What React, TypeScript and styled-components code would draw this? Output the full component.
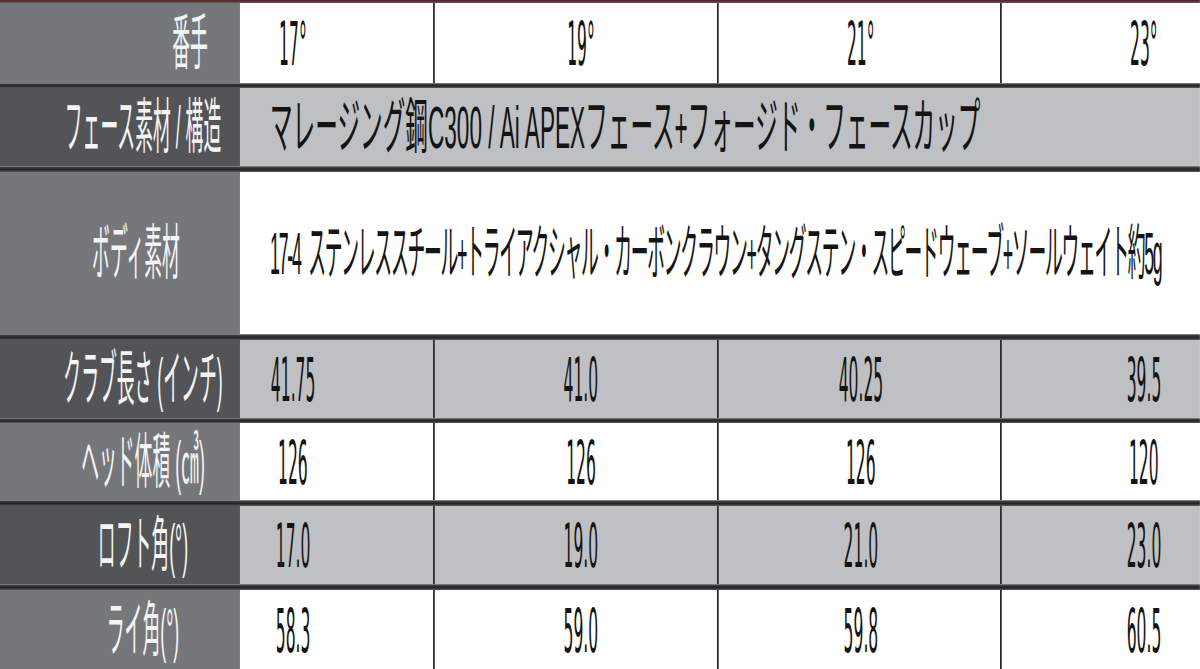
import React from "react";
import styled, { createGlobalStyle } from "styled-components";

/* The whole table is typeset at a wide size and compressed horizontally,
   reproducing the tall, condensed lettering of the reference. */
const S = 0.297;
const w = (v: number) => `${(v / S).toFixed(2)}px`;

const GlobalStyle = createGlobalStyle`
  html, body {
    margin: 0;
    padding: 0;
    width: 1200px;
    height: 669px;
    overflow: hidden;
    background: #ffffff;
  }
  * { box-sizing: border-box; }
`;

const Table = styled.div`
  width: ${w(1200)};
  height: 669px;
  display: flex;
  flex-direction: column;
  font-family: "Liberation Sans", "Noto Sans CJK JP", sans-serif;
  transform: scaleX(${S});
  transform-origin: left top;
`;

const TopStrip = styled.div`
  height: 3px;
  flex: none;
  background: linear-gradient(to bottom, #4e2226, #7a4a4f);
`;

const RowDivider = styled.div<{ $h: number }>`
  height: ${(p) => p.$h}px;
  flex: none;
  background: linear-gradient(
    to bottom,
    #9a9a9c 0%,
    #3c3c3e 25%,
    #232325 60%,
    #5c5c5e 100%
  );
`;

const Row = styled.div<{ $h: number }>`
  height: ${(p) => p.$h}px;
  flex: none;
  display: grid;
  grid-template-columns: ${w(240)} ${w(193)} ${w(284)} ${w(283)} 1fr;
`;

const HeadCell = styled.div<{ $dark: boolean; $pl: number }>`
  background: ${(p) => (p.$dark ? "#535457" : "#76777b")};
  color: #f4f4f4;
  display: flex;
  align-items: center;
  justify-content: center;
  padding-left: ${(p) => w(p.$pl)};
`;

const DataCell = styled.div<{
  $gray: boolean;
  $line: boolean;
  $pl?: number;
  $pr?: number;
}>`
  background: ${(p) => (p.$gray ? "#bfc0c3" : "#ffffff")};
  color: #141414;
  display: flex;
  align-items: center;
  justify-content: center;
  border-left: ${(p) => (p.$line ? `${w(2)} solid #2c2c2e` : "none")};
  padding-left: ${(p) => w(p.$pl ?? 0)};
  padding-right: ${(p) => w(p.$pr ?? 0)};
`;

const SpanCell = styled.div<{ $gray: boolean }>`
  grid-column: 2 / -1;
  background: ${(p) => (p.$gray ? "#bfc0c3" : "#ffffff")};
  color: #141414;
  display: flex;
  align-items: center;
  justify-content: flex-start;
  padding-left: ${w(30)};
`;

const Text = styled.span<{ $wide?: number; $track?: number }>`
  display: inline-block;
  flex: none;
  white-space: nowrap;
  font-size: 60px;
  line-height: 1;
  font-weight: 400;
  letter-spacing: ${(p) => p.$track ?? 0}px;
  transform: translateY(1px) scaleX(${(p) => p.$wide ?? 1});
  transform-origin: left center;
`;

const Num = styled.span`
  display: inline-block;
  flex: none;
  white-space: nowrap;
  font-family: "DejaVu Sans", "Liberation Sans", sans-serif;
  font-size: 60px;
  line-height: 1;
  font-weight: 400;
  transform: translateY(1px) scaleX(0.874);
  transform-origin: center center;
`;

type ValueRow = {
  label: string;
  labelPl?: number;
  values: string[];
  h: number;
};

const colPad = [
  { pl: 0, pr: 87 },
  { pl: 10, pr: 0 },
  { pl: 3, pr: 0 },
  { pl: 86, pr: 0 },
];

function Values({ row, index }: { row: ValueRow; index: number }) {
  const gray = index % 2 === 1;
  return (
    <Row $h={row.h}>
      <HeadCell $dark={gray} $pl={row.labelPl ?? 46}>
        <Text>{row.label}</Text>
      </HeadCell>
      {row.values.map((v, i) => (
        <DataCell
          key={i}
          $gray={gray}
          $line={i > 0}
          $pl={colPad[i].pl}
          $pr={colPad[i].pr}
        >
          <Num>{v}</Num>
        </DataCell>
      ))}
    </Row>
  );
}

export default function App() {
  const first: ValueRow = {
    label: "番手",
    labelPl: 140,
    values: ["17°", "19°", "21°", "23°"],
    h: 80,
  };
  const rest: ValueRow[] = [
    { label: "クラブ長さ (インチ)", values: ["41.75", "41.0", "40.25", "39.5"], h: 78 },
    { label: "ヘッド体積 (㎤)", values: ["126", "126", "126", "120"], h: 77 },
    { label: "ロフト角(°)", values: ["17.0", "19.0", "21.0", "23.0"], h: 78 },
    { label: "ライ角(°)", values: ["58.3", "59.0", "59.8", "60.5"], h: 79 },
  ];

  return (
    <>
      <GlobalStyle />
      <Table>
        <TopStrip />
        <Values row={first} index={0} />
        <RowDivider $h={5} />
        <Row $h={78}>
          <HeadCell $dark={true} $pl={46}>
            <Text>フェース素材 / 構造</Text>
          </HeadCell>
          <SpanCell $gray={true}>
            <Text $wide={1.27}>
              マレージング鋼C300 / Ai APEXフェース+フォージド・フェースカップ
            </Text>
          </SpanCell>
        </Row>
        <RowDivider $h={6} />
        <Row $h={162}>
          <HeadCell $dark={false} $pl={32}>
            <Text>ボディ素材</Text>
          </HeadCell>
          <SpanCell $gray={false}>
            <Text $track={-4.3}>
              {"17-4\u2002ステンレススチール+トライアクシャル・カーボンクラウン+タングステン・スピードウェーブ+ソールウェイト約5g"}
            </Text>
          </SpanCell>
        </Row>
        {rest.map((r, i) => (
          <React.Fragment key={r.label}>
            <RowDivider $h={i === 1 ? 5 : 6} />
            <Values row={r} index={i + 1} />
          </React.Fragment>
        ))}
      </Table>
    </>
  );
}
